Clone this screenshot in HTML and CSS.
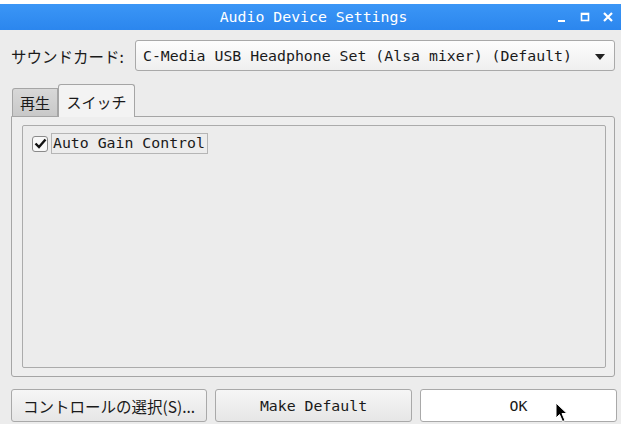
FILE: index.html
```html
<!DOCTYPE html>
<html lang="ja">
<head>
  <meta charset="UTF-8">
  <title>Audio Device Settings</title>
  <link rel="stylesheet" href="styles.css">
</head>
<body>

  <div class="window">
    <div class="titlebar">
      <span class="title">Audio Device Settings</span>
      <div class="wm-buttons">
        <svg width="12" height="12" viewBox="0 0 12 12"><rect x="2" y="8" width="7" height="2" fill="#fff"/></svg>
        <svg width="12" height="12" viewBox="0 0 12 12"><rect x="2.5" y="1.5" width="7" height="7" fill="none" stroke="#fff" stroke-width="1.6"/><rect x="2" y="1" width="8" height="2" fill="#fff"/></svg>
        <svg width="12" height="12" viewBox="0 0 12 12"><path d="M2 1 L10 9 M10 1 L2 9" stroke="#fff" stroke-width="2.2"/></svg>
      </div>
    </div>

    <div class="content">
      <div class="card-row">
        <label class="card-label">サウンドカード:</label>
        <div class="combo">
          <span>C-Media USB Headphone Set (Alsa mixer) (Default)</span>
          <svg class="arrow" width="10" height="6" viewBox="0 0 10 6"><path d="M0 0 L10 0 L5 6 Z" fill="#222"/></svg>
        </div>
      </div>

      <div class="tabs">
        <div class="tab">再生</div>
        <div class="tab active">スイッチ</div>
      </div>
      <div class="tab-pane">
        <div class="group">
          <div class="check-row">
            <span class="checkbox">
              <svg width="13" height="11" viewBox="0 0 13 11"><path d="M1.5 5.5 L5 9 L11.5 1.5" fill="none" stroke="#111" stroke-width="2.4"/></svg>
            </span>
            <span class="check-label">Auto Gain Control</span>
          </div>
        </div>
      </div>

      <div class="buttons">
        <button class="btn jp">コントロールの選択(S)...</button>
        <button class="btn">Make Default</button>
        <button class="btn default">OK</button>
      </div>
    </div>
  </div>

  <svg class="cursor" width="14" height="22" viewBox="0 0 14 22">
    <path d="M1 1 L1 16 L4.5 12.5 L7.5 19.5 L10 18.5 L7 11.5 L12 11.5 Z" fill="#000" stroke="#fff" stroke-width="1"/>
  </svg>

</body>
</html>
```

FILE: styles.css
```css
* {
  box-sizing: border-box;
}

body {
  margin: 0;
  background: #fff;
  font-family: "DejaVu Sans Mono", "Noto Sans CJK JP", monospace;
  font-size: 14.85px;
  color: #1a1a1a;
  position: relative;
}

.window {
  width: 621px;
  height: 420px;
  margin-top: 4px;
  background: #ececec;
  display: flex;
  flex-direction: column;
}

.titlebar {
  flex-shrink: 0;
  height: 26px;
  background: linear-gradient(#3b96f6, #2b86ee);
  position: relative;
  display: flex;
  align-items: center;
  justify-content: center;
}

.title {
  color: #fff;
  margin-left: 6px;
}

.wm-buttons {
  position: absolute;
  right: 7px;
  top: 8px;
  display: flex;
  gap: 11px;
}

.content {
  flex: 1;
  padding: 10px 6px 0 11px;
  display: flex;
  flex-direction: column;
}

.card-row {
  display: flex;
  align-items: center;
  height: 31px;
  flex-shrink: 0;
}

.card-label {
  width: 124px;
  font-family: "Noto Sans CJK JP", sans-serif;
  font-size: 15.5px;
}

.combo {
  flex: 1;
  height: 31px;
  border: 1px solid #a9a9a9;
  border-radius: 3px;
  background: linear-gradient(#fdfdfd, #efefef);
  display: flex;
  align-items: center;
  justify-content: space-between;
  padding: 0 9px 0 7px;
}

.arrow {
  margin-top: 2px;
}

.tabs {
  display: flex;
  align-items: flex-end;
  margin-top: 13px;
  padding-left: 1px;
  height: 32px;
  flex-shrink: 0;
}

.tab {
  font-family: "Noto Sans CJK JP", sans-serif;
  font-size: 15px;
  width: 46px;
  height: 28px;
  line-height: 28px;
  text-align: center;
  background: linear-gradient(#d8d8d8, #c8c8c8);
  border: 1px solid #a5a5a5;
  border-bottom: none;
  border-radius: 3px 0 0 0;
}

.tab.active {
  width: 77px;
  height: 33px;
  line-height: 34px;
  background: #f3f3f3;
  border-radius: 3px 3px 0 0;
  margin-bottom: -1px;
  position: relative;
  z-index: 1;
}

.tab-pane {
  flex-shrink: 0;
  width: 604px;
  height: 261px;
  border: 1px solid #a5a5a5;
  border-radius: 0 3px 3px 3px;
  background: #eeeeee;
  padding: 8px 0 0 10px;
}

.group {
  width: 584px;
  height: 243px;
  border: 1px solid #ababab;
  border-radius: 2px;
  background: #ececec;
}

.check-row {
  display: flex;
  align-items: center;
  margin: 7px 0 0 9px;
}

.checkbox {
  width: 16px;
  height: 16px;
  border: 1px solid #8a8a8a;
  border-radius: 3px;
  background: #f8f8f8;
  display: flex;
  align-items: center;
  justify-content: center;
}

.check-label {
  margin-left: 3px;
  border: 1px solid #b5b5b5;
  padding: 0 2px 0 1px;
  height: 21px;
  line-height: 19px;
}

.buttons {
  display: flex;
  gap: 8px;
  margin-top: 12px;
  margin-right: -6px;
}

.btn {
  flex-shrink: 0;
  width: 197px;
  height: 33px;
  font-family: "DejaVu Sans Mono", "Noto Sans CJK JP", monospace;
  font-size: 14.85px;
  color: #1a1a1a;
  border: 1px solid #a9a9a9;
  border-radius: 3px;
  background: linear-gradient(#f6f6f6, #e6e6e6);
  padding: 0;
}

.btn.jp {
  width: 196px;
  font-family: "Noto Sans CJK JP", sans-serif;
  font-size: 15.5px;
}

.btn.default {
  background: #fff;
}

.cursor {
  position: absolute;
  left: 555px;
  top: 402px;
}
```
